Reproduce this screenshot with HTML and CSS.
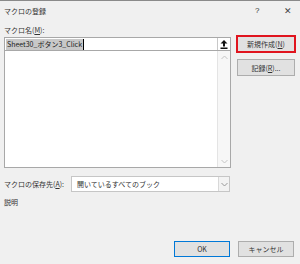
FILE: index.html
```html
<!DOCTYPE html>
<html lang="ja">
<head>
    <meta charset="UTF-8">
    <title>マクロの登録</title>
    <link rel="stylesheet" href="styles.css">
</head>
<body>
    <div class="dialog">
        <div class="titlebar">
            <span class="title">マクロの登録</span>
            <span class="help">?</span>
            <span class="close">✕</span>
        </div>
        <div class="main">
            <div class="left">
                <div class="label">マクロ名(<u>M</u>):</div>
                <div class="name-box">
                    <span class="name-text">Sheet30_ボタン3_Click</span><span class="caret"></span>
                    <span class="collapse-btn">
                        <svg width="8" height="9" viewBox="0 0 8 9">
                            <path d="M4 0 L7.5 3.5 H5 V6.5 H3 V3.5 H0.5 Z" fill="#111"/>
                            <rect x="0.5" y="7.5" width="7" height="1.5" fill="#111"/>
                        </svg>
                    </span>
                </div>
                <div class="list-box">
                    <div class="scroll">
                        <svg width="7" height="5" viewBox="0 0 7 5"><path d="M0.5 4 L3.5 1 L6.5 4" stroke="#c4c4c4" fill="none"/></svg>
                        <svg width="7" height="5" viewBox="0 0 7 5"><path d="M0.5 1 L3.5 4 L6.5 1" stroke="#c4c4c4" fill="none"/></svg>
                    </div>
                </div>
            </div>
            <div class="right">
                <button class="btn btn-new">新規作成(<u>N</u>)</button>
                <button class="btn">記録(<u>R</u>)...</button>
            </div>
        </div>
        <div class="store-row">
            <span class="label">マクロの保存先(<u>A</u>):</span>
            <div class="select-box">
                <span class="select-text">開いているすべてのブック</span>
                <span class="select-arrow">
                    <svg width="7" height="5" viewBox="0 0 7 5"><path d="M0.5 1 L3.5 4 L6.5 1" stroke="#999" fill="none"/></svg>
                </span>
            </div>
        </div>
        <div class="desc">説明</div>
        <div class="footer">
            <button class="btn btn-ok">OK</button>
            <button class="btn">キャンセル</button>
        </div>
    </div>
</body>
</html>
```

FILE: styles.css
```css
body {
    margin: 0;
    background-color: #f0f0f0;
    font-family: "Noto Sans CJK JP", "Liberation Sans", sans-serif;
    font-size: 7px;
    color: #333;
}

u {
    text-decoration: underline;
}

.dialog {
    width: 300px;
    height: 264px;
    box-sizing: border-box;
    border-top: 1px solid #8a8a8a;
    background-color: #f0f0f0;
}

.titlebar {
    height: 19px;
    display: flex;
    align-items: center;
    padding-left: 4px;
}

.title {
    flex: 1;
}

.help {
    width: 12px;
    margin-right: 17px;
    font-family: "Liberation Sans", sans-serif;
    font-size: 8px;
}

.close {
    width: 16px;
    font-size: 9px;
    color: #444;
}

.main {
    display: flex;
    padding-left: 4px;
}

.left {
    width: 227px;
}

.label {
    height: 12px;
    line-height: 12px;
    margin-top: 4px;
}

.name-box {
    margin-top: 1px;
    height: 14px;
    box-sizing: border-box;
    border: 1px solid #a8a8a8;
    background-color: #fff;
    display: flex;
    align-items: center;
    padding-left: 1px;
}

.name-text {
    background-color: #c8c8c8;
    color: #222;
    line-height: 11px;
    padding: 0 1px;
}

.caret {
    width: 1px;
    height: 11px;
    background-color: #000;
}

.collapse-btn {
    margin-left: auto;
    width: 12px;
    height: 12px;
    border-left: 1px solid #c8c8c8;
    display: flex;
    align-items: center;
    justify-content: center;
}

.list-box {
    height: 117px;
    box-sizing: border-box;
    border: 1px solid #a8a8a8;
    border-top: none;
    background-color: #fff;
    display: flex;
    justify-content: flex-end;
}

.scroll {
    width: 12px;
    border-left: 1px solid #e4e4e4;
    background-color: #f7f7f7;
    display: flex;
    flex-direction: column;
    justify-content: space-between;
    align-items: center;
    padding: 4px 0 3px;
}

.right {
    display: flex;
    flex-direction: column;
    gap: 6px;
    margin-left: 6px;
    padding-top: 15px;
}

.btn {
    width: 58px;
    height: 17px;
    box-sizing: border-box;
    border: 1px solid #adadad;
    background-color: #e1e1e1;
    font-family: inherit;
    font-size: 7px;
    color: #333;
    padding: 0;
}

.btn-new {
    width: 60px;
    margin-left: -1px;
    border: 2px solid #e0141e;
    height: 18px;
}

.store-row {
    display: flex;
    align-items: center;
    padding-left: 4px;
    margin-top: 8px;
}

.store-row .label {
    width: 67px;
    margin-top: 0;
    white-space: nowrap;
}

.select-box {
    width: 159px;
    height: 16px;
    box-sizing: border-box;
    border: 1px solid #c6c6c6;
    background-color: #fff;
    display: flex;
    align-items: center;
    padding-left: 5px;
}

.select-text {
    flex: 1;
}

.select-arrow {
    width: 10px;
    height: 14px;
    border-left: 1px solid #d8d8d8;
    background-color: #f3f3f3;
    display: flex;
    align-items: center;
    justify-content: center;
}

.desc {
    padding-left: 4px;
    margin-top: 4px;
    line-height: 12px;
}

.footer {
    display: flex;
    justify-content: flex-end;
    gap: 8px;
    padding-right: 6px;
    margin-top: 33px;
}

.footer .btn {
    width: 56px;
    height: 16px;
}

.btn-ok {
    border: 1px solid #0078d7;
}
```
